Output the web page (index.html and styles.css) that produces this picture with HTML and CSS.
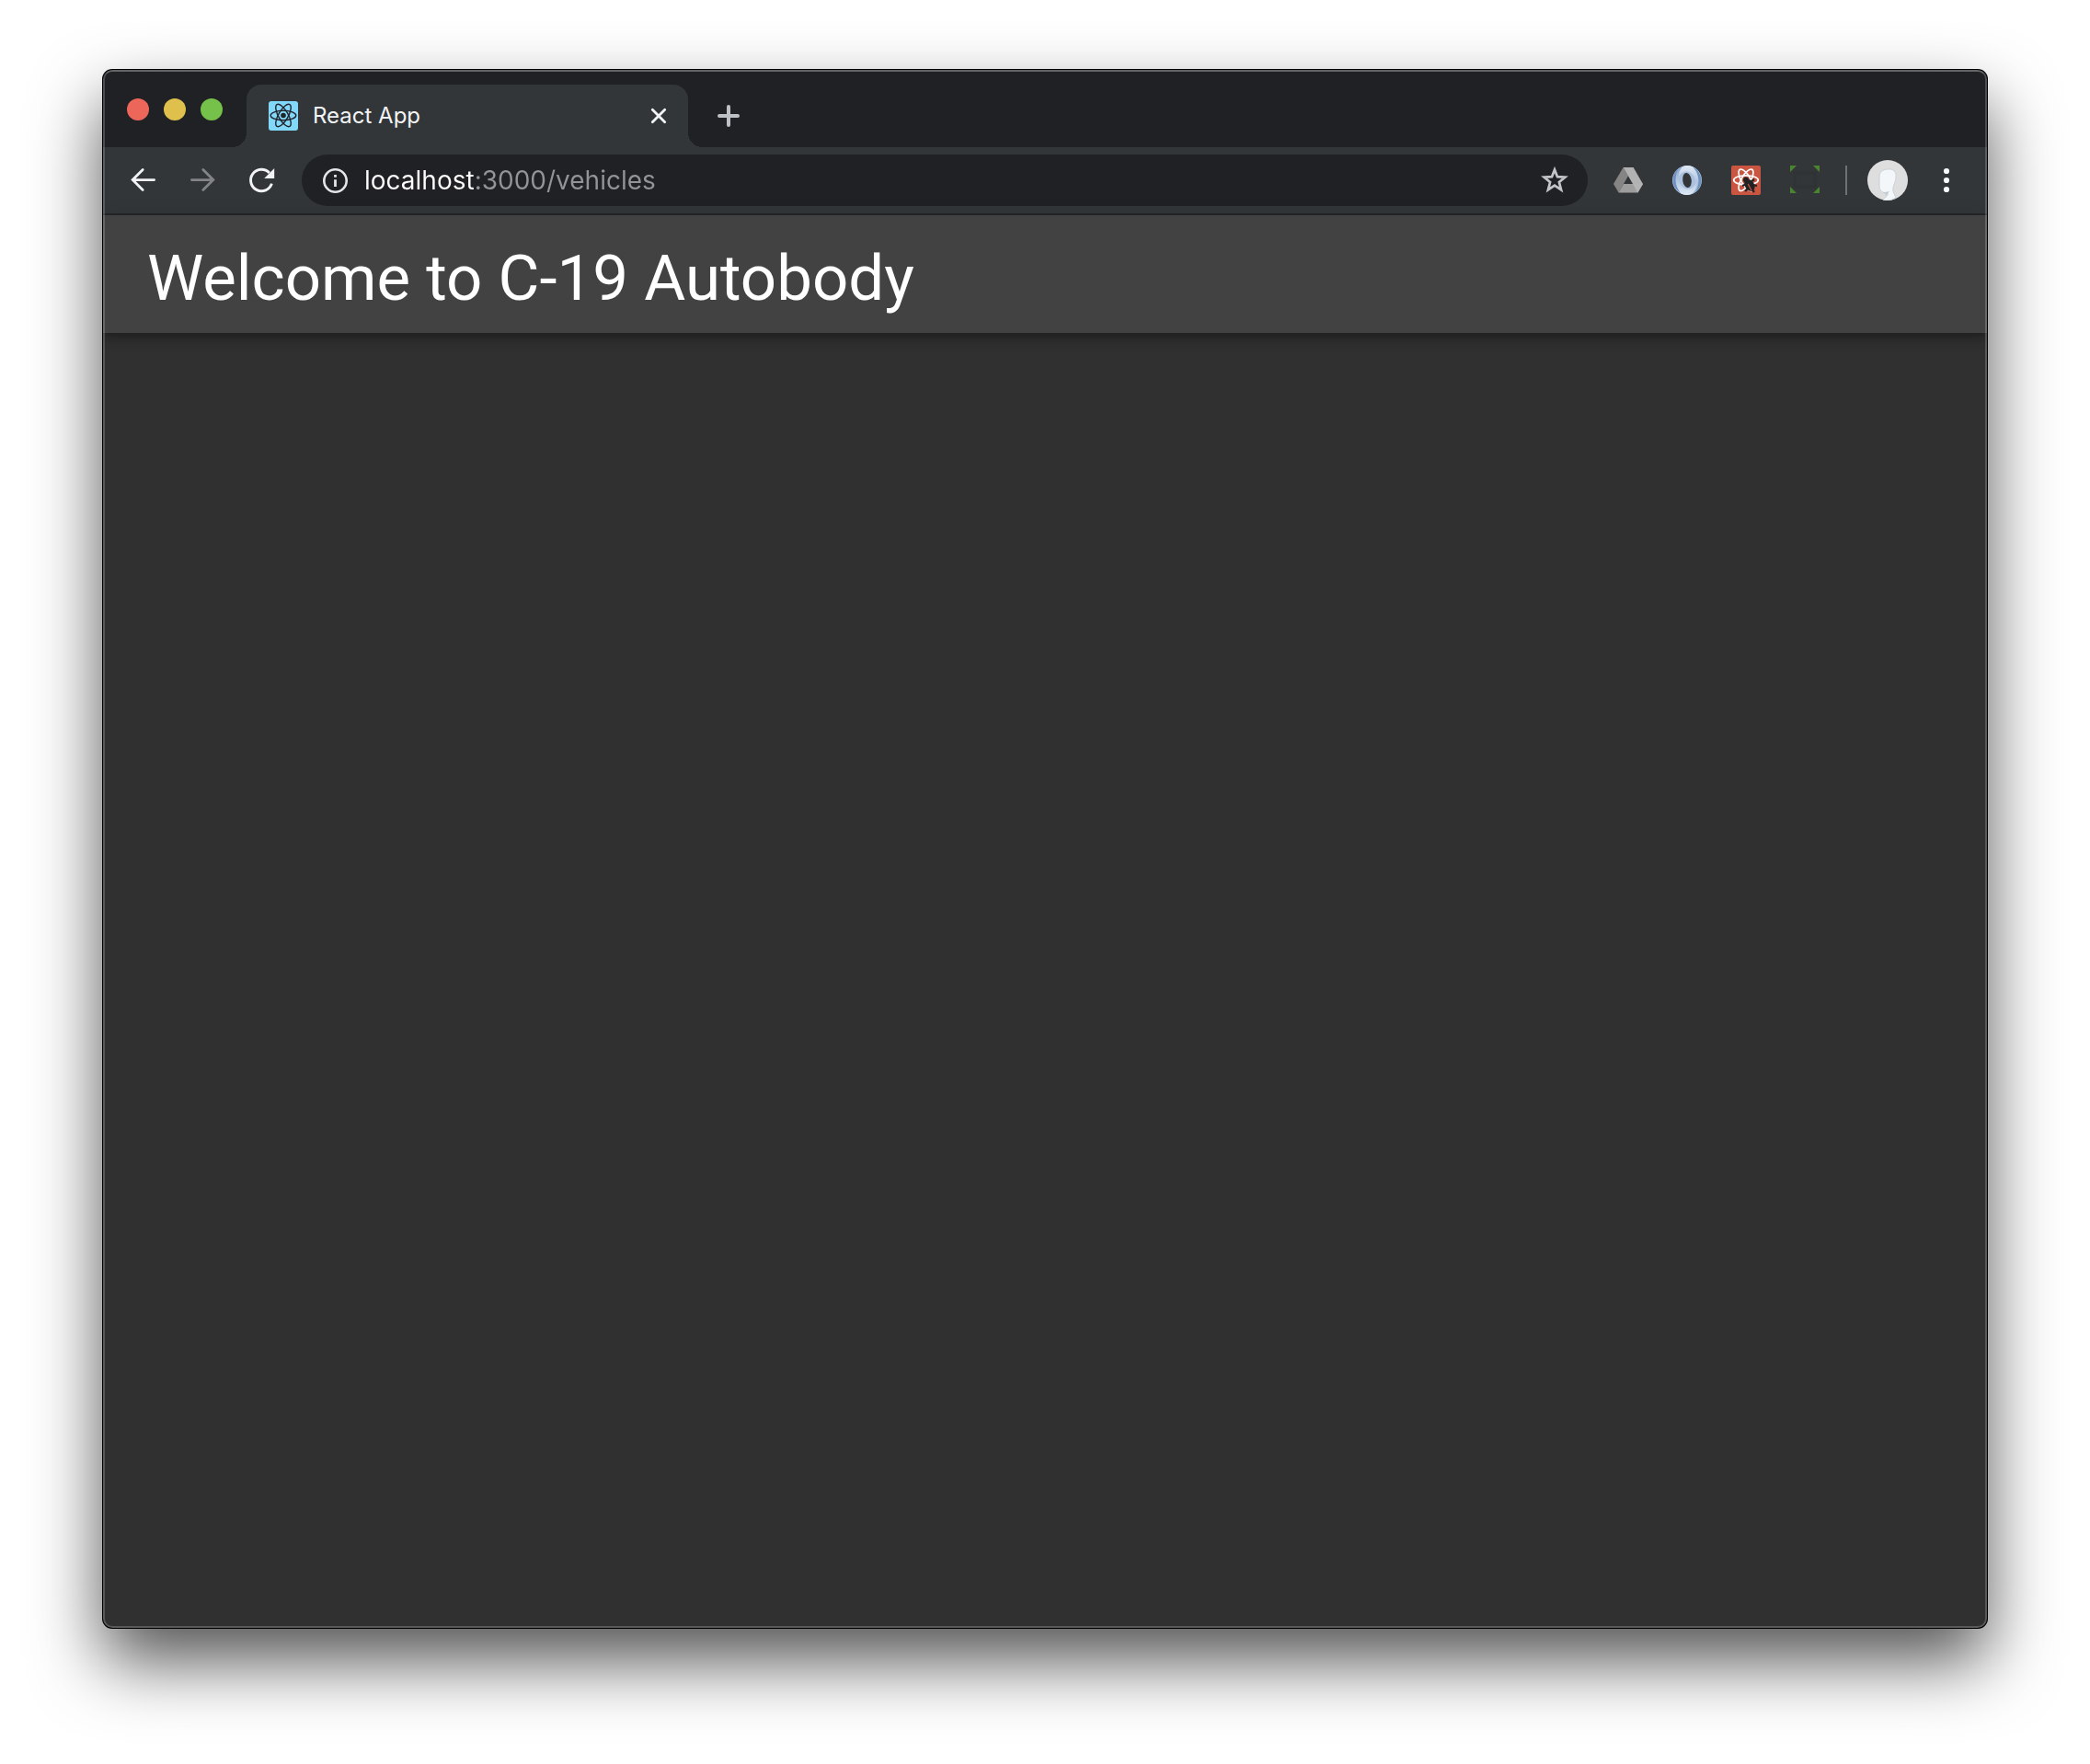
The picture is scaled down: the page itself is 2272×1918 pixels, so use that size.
FILE: index.html
```html
<!DOCTYPE html>
<html lang="en">
<head>
<meta charset="utf-8">
<meta name="viewport" content="width=device-width, initial-scale=1">
<title>React App</title>
<link rel="stylesheet" href="styles.css">
</head>
<body>
<div class="window">
  <div class="tab-strip">
    <div class="window-controls">
      <button class="light light-close" aria-label="Close window"></button>
      <button class="light light-minimize" aria-label="Minimize window"></button>
      <button class="light light-zoom" aria-label="Zoom window"></button>
    </div>
    <div class="tab">
      <svg class="icon" viewBox="0 0 32 32" width="32" height="32" aria-hidden="true">
        <rect width="32" height="32" rx="3" fill="#82d8f8"/>
        <g fill="none" stroke="#20232a" stroke-width="1.4">
          <ellipse cx="16" cy="15.5" rx="13.8" ry="5.2"/>
          <ellipse cx="16" cy="15.5" rx="13.8" ry="5.2" transform="rotate(60 16 15.5)"/>
          <ellipse cx="16" cy="15.5" rx="13.8" ry="5.2" transform="rotate(120 16 15.5)"/>
        </g>
        <circle cx="16" cy="15.5" r="2.8" fill="#20232a"/>
      </svg>
      <span class="tab-title">React App</span>
      <button class="icon-button" aria-label="Close tab">
        <svg viewBox="0 0 32 32" width="32" height="32"><path d="M9.3 9.3L22.7 22.7M22.7 9.3L9.3 22.7" fill="none" stroke="#f1f3f4" stroke-width="2.8" stroke-linecap="round"/></svg>
      </button>
    </div>
    <button class="icon-button new-tab" aria-label="New tab">
      <svg viewBox="0 0 32 32" width="32" height="32"><path d="M16 6V26M6 16H26" fill="none" stroke="#bdc1c6" stroke-width="4" stroke-linecap="round"/></svg>
    </button>
  </div>

  <div class="toolbar">
    <div class="nav-buttons">
      <button class="icon-button" aria-label="Back">
        <svg viewBox="0 0 32 32" width="32" height="32"><path d="M15.2 4.6L4.2 15.6L15.2 26.6M5 15.6H27.6" fill="none" stroke="#f1f3f4" stroke-width="2.8" stroke-linecap="round"/></svg>
      </button>
      <button class="icon-button" aria-label="Forward" disabled>
        <svg viewBox="0 0 32 32" width="32" height="32"><path d="M16.8 4.6L27.8 15.6L16.8 26.6M27 15.6H4.4" fill="none" stroke="#828486" stroke-width="2.8" stroke-linecap="round"/></svg>
      </button>
      <button class="icon-button" aria-label="Reload">
        <svg viewBox="0 0 32 32" width="32" height="32"><path d="M27.4 19.6A11.7 11.7 0 1 1 24.8 8" fill="none" stroke="#f1f3f4" stroke-width="2.9"/><path d="M30.2 3V14H19.2Z" fill="#f1f3f4"/></svg>
      </button>
    </div>
    <div class="address-bar">
      <svg class="icon" viewBox="0 0 32 32" width="32" height="32" aria-hidden="true">
        <circle cx="16.5" cy="16.5" r="12.2" fill="none" stroke="#e4e5e6" stroke-width="2.6"/>
        <path d="M15.1 15.2H17.9V23H15.1ZM15.1 10H17.9V12.8H15.1Z" fill="#e4e5e6"/>
      </svg>
      <input class="url" type="text" aria-label="Address" value="localhost:3000/vehicles">
      <button class="icon-button" aria-label="Bookmark this page">
        <svg viewBox="0 0 32 32" width="32" height="32"><path d="M16 4.4L19 12.2L27.4 12.7L20.9 18L23.1 26.4L16 21.7L8.9 26.4L11.1 18L4.6 12.7L13 12.2Z" fill="none" stroke="#c4c5c6" stroke-width="2.7"/></svg>
      </button>
    </div>
    <div class="extensions">
      <button class="icon-button" aria-label="Google Drive">
        <svg viewBox="0 0 32 32" width="32" height="32">
          <path d="M10.6 2L16 11.2L5.6 29.6L0 20Z" fill="#858585"/>
          <path d="M10.6 2H21.6L32 20H21Z" fill="#b2b2b2"/>
          <path d="M11 20H32L26.4 29.6H5.6Z" fill="#9d9d9d"/>
          <path d="M21 20H32L26.4 29.6Z" fill="#b4b4b4"/>
          <path d="M16.3 13L20.4 20H12.2Z" fill="#323639"/>
        </svg>
      </button>
      <button class="icon-button" aria-label="JSON viewer">
        <svg viewBox="0 0 32 32" width="32" height="32">
          <defs>
            <linearGradient id="ring-light" x1="0" y1="0" x2="0" y2="1"><stop offset="0" stop-color="#dfe9f5"/><stop offset="1" stop-color="#8eabd0"/></linearGradient>
            <linearGradient id="ring-shade" x1="0" y1="0" x2="0" y2="1"><stop offset="0" stop-color="#86a5cd"/><stop offset="1" stop-color="#dfe9f5"/></linearGradient>
          </defs>
          <circle cx="16" cy="16" r="16" fill="#a9c1de"/>
          <path d="M16 0A16 16 0 0 1 21 31C27 24 27 13 20 8C14 4 7 8 6 15C4 8 9 0 16 0Z" fill="url(#ring-light)"/>
          <path d="M16 32A16 16 0 0 1 11 1C5 8 5 19 12 24C18 28 25 24 26 17C28 24 23 32 16 32Z" fill="url(#ring-shade)"/>
          <path d="M22 1.5A16 16 0 0 1 25 29C30 21 30 9 22 1.5Z" fill="#6f92c1"/>
          <path d="M10 30.5A16 16 0 0 1 7 3C2 11 2 23 10 30.5Z" fill="#6f92c1"/>
          <ellipse cx="16" cy="16" rx="4.8" ry="8" fill="#323639" transform="rotate(-8 16 16)"/>
        </svg>
      </button>
      <button class="icon-button" aria-label="React Developer Tools">
        <svg viewBox="0 0 32 32" width="32" height="32">
          <rect width="32" height="32" rx="2" fill="#ca5540"/>
          <g fill="none" stroke="#fff" stroke-width="1.7">
            <ellipse cx="16" cy="15.8" rx="13.3" ry="5"/>
            <ellipse cx="16" cy="15.8" rx="13.3" ry="5" transform="rotate(60 16 15.8)"/>
            <ellipse cx="16" cy="15.8" rx="13.3" ry="5" transform="rotate(120 16 15.8)"/>
          </g>
          <circle cx="16" cy="15.6" r="3" fill="#222"/>
          <ellipse cx="20" cy="21.5" rx="5" ry="7" fill="#222" transform="rotate(-32 20 21.5)"/>
          <path d="M12 22L17 20M15 28L19 24M25 29L22 25M28 22L23 21M25 15L21 18" stroke="#222" stroke-width="2.2"/>
          <path d="M18.2 20L22.2 27.5" stroke="#ca5540" stroke-width="1.2"/>
        </svg>
      </button>
      <button class="icon-button" aria-label="Full page capture">
        <svg viewBox="0 0 32 32" width="32" height="32">
          <path d="M0 0H7L0 7ZM25 0H32V7ZM0 23L7 30H0ZM32 23V30H25Z" fill="#4b842f"/>
          <rect x="5" y="8" width="22" height="15" fill="none" stroke="#303336" stroke-width="3"/>
        </svg>
      </button>
      <span class="divider"></span>
      <button class="icon-button" aria-label="Profile">
        <svg viewBox="0 0 44 44" width="44" height="44">
          <circle cx="22" cy="22" r="22" fill="#dedede"/>
          <path d="M22 10C28 9 32 13 31 19C31 25 27 27 28 34L31 41Q22 46 17 43C20 40 23 39 22 35C16 37 13 33 13 28V18C13 13 17 10 22 10Z" fill="#f4f7fa" stroke="#c9d0d8" stroke-width="1"/>
          <path d="M15 34Q18 36 24 34L20 39Q20 36 15 34Z" fill="#c3cbd5"/>
        </svg>
      </button>
      <button class="icon-button menu" aria-label="Menu">
        <svg viewBox="0 0 32 32" width="32" height="32" fill="#f8f9fa"><circle cx="16" cy="6" r="3.1"/><circle cx="16" cy="16" r="3.1"/><circle cx="16" cy="26" r="3.1"/></svg>
      </button>
    </div>
  </div>

  <main class="page">
    <header class="app-bar">
      <h1 class="app-title">Welcome to C-19 Autobody</h1>
    </header>
  </main>
</div>
</body>
</html>
```
FILE: styles.css
```css
* {
  box-sizing: border-box;
}

body {
  margin: 0;
  min-height: 100vh;
  padding: 76px 112px 148px;
  display: flex;
  flex-direction: column;
  background: #fff;
  font-family: Inter, "Liberation Sans", sans-serif;
}

button {
  padding: 0;
  border: 0;
  background: none;
}

svg {
  display: block;
}

.window {
  position: relative;
  flex: 1;
  display: flex;
  flex-direction: column;
  overflow: hidden;
  border-radius: 10px;
  background: #303030;
  box-shadow: 0 0 0 1px #000, 0 36px 76px rgba(0, 0, 0, 0.68);
}

/* Light rim drawn over the window content */
.window::after {
  content: "";
  position: absolute;
  inset: 0;
  border: 2px solid rgba(255, 255, 255, 0.2);
  border-top-color: rgba(255, 255, 255, 0.3);
  border-radius: 10px;
  pointer-events: none;
}

.tab-strip {
  display: flex;
  height: 84px;
  padding-top: 16px;
  background: #202124;
}

.window-controls {
  display: flex;
  gap: 16px;
  padding: 15px 26px 0;
}

.light {
  width: 24px;
  height: 24px;
  border-radius: 50%;
}

.light-close {
  background: #ec665a;
}

.light-minimize {
  background: #e0c04c;
}

.light-zoom {
  background: #76c149;
}

.tab {
  position: relative;
  display: flex;
  align-items: center;
  gap: 16px;
  width: 480px;
  padding: 0 16px 0 24px;
  border-radius: 16px 16px 0 0;
  background: #323639;
}

/* Concave feet on both sides of the tab */
.tab::before,
.tab::after {
  content: "";
  position: absolute;
  bottom: 0;
  width: 16px;
  height: 16px;
}

.tab::before {
  right: 100%;
  background: radial-gradient(circle at 0 0, transparent 16px, #323639 16px);
}

.tab::after {
  left: 100%;
  background: radial-gradient(circle at 100% 0, transparent 16px, #323639 16px);
}

.tab-title {
  flex: 1;
  color: #f1f3f4;
  font-size: 24px;
  line-height: 32px;
}

.icon-button,
.icon {
  flex: none;
}

.new-tab {
  margin-left: 28px;
}

.toolbar {
  display: flex;
  align-items: center;
  gap: 28px;
  height: 74px;
  padding: 0 28px;
  border-bottom: 2px solid #252729;
  background: #323639;
}

.nav-buttons {
  display: flex;
  gap: 32px;
}

.address-bar {
  flex: 1;
  display: flex;
  align-items: center;
  gap: 16px;
  height: 56px;
  padding: 0 20px;
  border-radius: 28px;
  background: #202124;
}

.url {
  flex: 1;
  min-width: 0;
  padding: 0;
  border: 0;
  outline: 0;
  /* Host in white, port and path in grey */
  background: linear-gradient(90deg, #fff 119px, #939496 119px) text;
  -webkit-text-fill-color: transparent;
  font: 28px/36px Inter, "Liberation Sans", sans-serif;
}

.extensions {
  display: flex;
  align-items: center;
  gap: 32px;
}

.divider {
  width: 2px;
  height: 32px;
  margin: 0 -10px 0 -4px;
  background: #6f7275;
}

.menu {
  margin-left: -6px;
}

.page {
  flex: 1;
}

.app-bar {
  display: flex;
  align-items: center;
  min-height: 128px;
  padding: 16px 48px 6px;
  background: #424242;
  box-shadow: 0 4px 8px -2px rgba(0, 0, 0, 0.2), 0 8px 10px rgba(0, 0, 0, 0.14), 0 2px 20px rgba(0, 0, 0, 0.12);
}

.app-title {
  margin: 0;
  color: #fff;
  font: 400 69px/84px Roboto, sans-serif;
}
```
